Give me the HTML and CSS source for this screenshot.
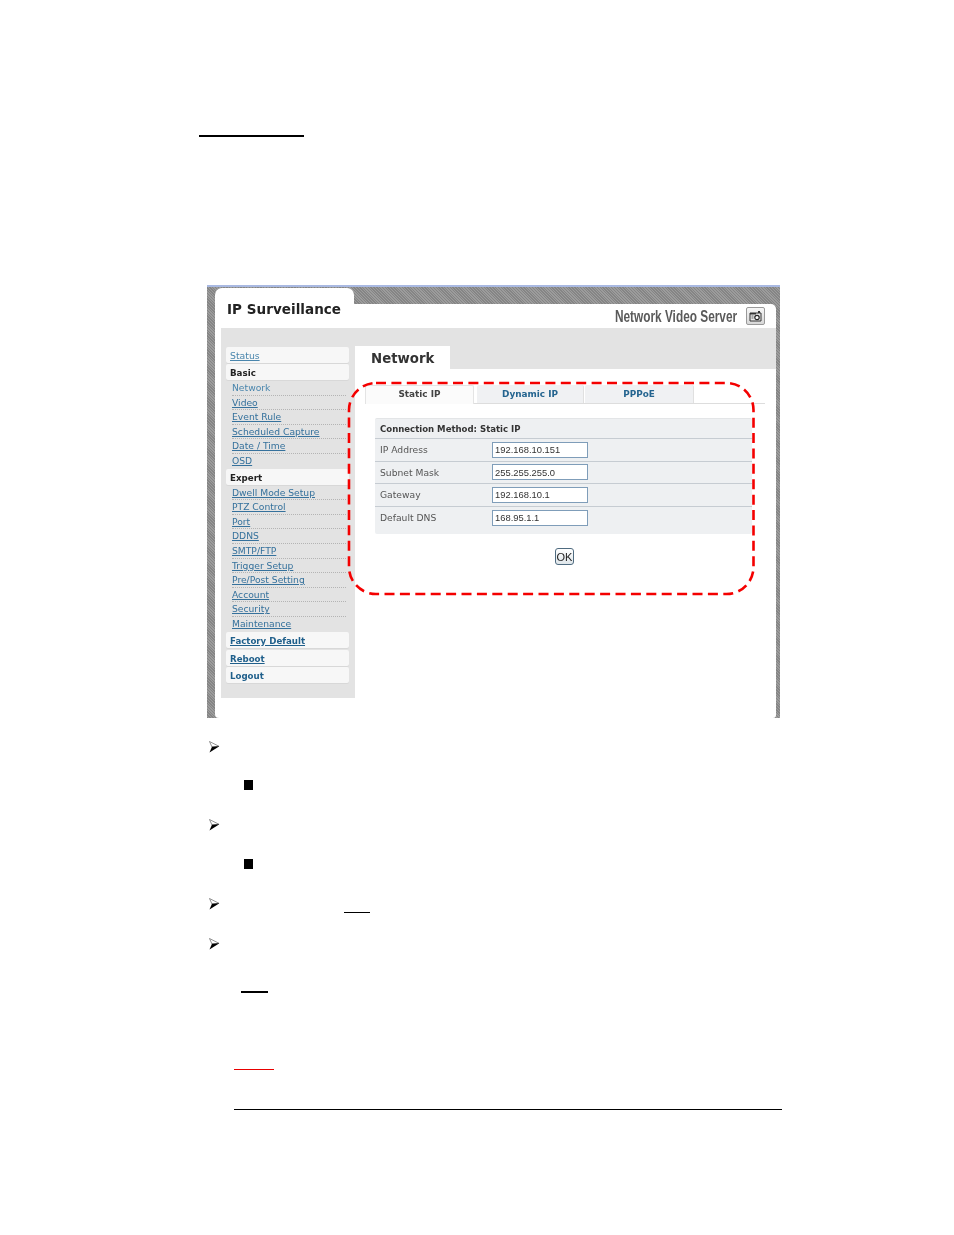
FILE: index.html
```html
<!DOCTYPE html>
<html lang="en">
<head>
    <meta charset="UTF-8">
    <title>IP Surveillance - Network</title>
    <link rel="stylesheet" href="styles.css">
</head>
<body>
    <div class="rule rule-heading"></div>

    <div class="shot">
        <div class="head">
            <div class="brand">IP Surveillance</div>
            <div class="head-right">
                <span class="product">Network Video Server</span>
                <span class="cam-btn">
                    <svg width="13" height="12" viewBox="0 0 13 12">
                        <path d="M1 3h11v8H1z" fill="#e8e8e8" stroke="#333" stroke-width="1"/>
                        <path d="M1 3h6v1.5H1zM9 1h2v2H9z" fill="#333"/>
                        <circle cx="8" cy="7.5" r="2.2" fill="#fff" stroke="#222" stroke-width="1.2"/>
                        <path d="M2.5 6h2M2.5 8h2" stroke="#666" stroke-width="1"/>
                    </svg>
                </span>
            </div>
        </div>

        <div class="body">
            <div class="sidebar">
                <div class="box"><a class="plain" href="#">Status</a></div>
                <div class="box section">Basic</div>
                <ul class="sublist">
                    <li><a class="light" href="#">Network</a></li>
                    <li><a href="#">Video</a></li>
                    <li><a href="#">Event Rule</a></li>
                    <li><a href="#">Scheduled Capture</a></li>
                    <li><a href="#">Date / Time</a></li>
                    <li><a href="#">OSD</a></li>
                </ul>
                <div class="box section">Expert</div>
                <ul class="sublist">
                    <li><a href="#">Dwell Mode Setup</a></li>
                    <li><a href="#">PTZ Control</a></li>
                    <li><a href="#">Port</a></li>
                    <li><a href="#">DDNS</a></li>
                    <li><a href="#">SMTP/FTP</a></li>
                    <li><a href="#">Trigger Setup</a></li>
                    <li><a href="#">Pre/Post Setting</a></li>
                    <li><a href="#">Account</a></li>
                    <li><a href="#">Security</a></li>
                    <li><a href="#">Maintenance</a></li>
                </ul>
                <div class="box action"><a href="#">Factory Default</a></div>
                <div class="box action reboot"><a href="#">Reboot</a></div>
                <div class="box action logout"><a href="#">Logout</a></div>
            </div>

            <div class="main">
                <div class="band"><div class="band-tab">Network</div></div>

                <div class="tabs">
                    <div class="tab active">Static IP</div>
                    <div class="tab dynamic">Dynamic IP</div>
                    <div class="tab pppoe">PPPoE</div>
                </div>

                <div class="form">
                    <div class="form-title">Connection Method: Static IP</div>
                    <div class="form-row">
                        <label>IP Address</label>
                        <input type="text" value="192.168.10.151">
                    </div>
                    <div class="form-row">
                        <label>Subnet Mask</label>
                        <input type="text" value="255.255.255.0">
                    </div>
                    <div class="form-row">
                        <label>Gateway</label>
                        <input type="text" value="192.168.10.1">
                    </div>
                    <div class="form-row">
                        <label>Default DNS</label>
                        <input type="text" value="168.95.1.1">
                    </div>
                </div>

                <div class="form-actions"><button type="button">OK</button></div>
            </div>
        </div>

        <!-- red callout drawn over the tabs and form -->
        <svg class="callout" width="410" height="216" viewBox="0 0 410 216">
            <rect x="2" y="2" width="404.5" height="211" rx="27" fill="none" stroke="#f40000" stroke-width="2.6" stroke-dasharray="10 5.4"/>
        </svg>
    </div>

    <svg class="arrow arrow-1" width="11" height="12" viewBox="0 0 11 12"><path d="M.5.5 10 5.3 3 6z" fill="#fff" stroke="#777" stroke-width=".8"/><path d="M3 5.8 10.4 5.2.5 11.5z" fill="#000"/></svg>
    <div class="square square-1"></div>
    <svg class="arrow arrow-2" width="11" height="12" viewBox="0 0 11 12"><path d="M.5.5 10 5.3 3 6z" fill="#fff" stroke="#777" stroke-width=".8"/><path d="M3 5.8 10.4 5.2.5 11.5z" fill="#000"/></svg>
    <div class="square square-2"></div>
    <svg class="arrow arrow-3" width="11" height="12" viewBox="0 0 11 12"><path d="M.5.5 10 5.3 3 6z" fill="#fff" stroke="#777" stroke-width=".8"/><path d="M3 5.8 10.4 5.2.5 11.5z" fill="#000"/></svg>
    <div class="rule rule-ip"></div>
    <svg class="arrow arrow-4" width="11" height="12" viewBox="0 0 11 12"><path d="M.5.5 10 5.3 3 6z" fill="#fff" stroke="#777" stroke-width=".8"/><path d="M3 5.8 10.4 5.2.5 11.5z" fill="#000"/></svg>
    <div class="rule rule-note"></div>
    <div class="rule rule-red"></div>
    <div class="rule rule-foot"></div>
</body>
</html>
```

FILE: styles.css
```css
body {
    margin: 0;
    padding-top: 135px;
    background: #fff;
    font-family: "DejaVu Sans", Verdana, sans-serif;
}

/* document marks around the screenshot */
.rule {
    background: #000;
    height: 1px;
}
.rule-heading {
    margin-left: 199px;
    width: 105px;
    height: 2px;
}
.rule-ip {
    margin: 2px 0 0 344px;
    width: 26px;
}
.rule-note {
    margin: 41px 0 0 241px;
    width: 27px;
    height: 2px;
}
.rule-red {
    margin: 76px 0 0 234px;
    width: 40px;
    background: #e80000;
}
.rule-foot {
    margin: 39px 0 0 234px;
    width: 548px;
}
.arrow {
    display: block;
    margin-left: 209px;
}
.arrow-1 { margin-top: 23px; }
.arrow-2 { margin-top: 29px; }
.arrow-3 { margin-top: 29px; }
.arrow-4 { margin-top: 25px; }
.square {
    width: 9px;
    height: 10px;
    margin-left: 244px;
    background: #000;
}
.square-1 { margin-top: 27px; }
.square-2 { margin-top: 28px; }

/* screenshot, slightly soft like the scanned original */
.shot {
    position: relative;
    box-sizing: border-box;
    width: 573px;
    height: 433px;
    margin: 148px 0 0 207px;
    padding: 1px 4px 0 8px;
    border-top: 2px solid #a9b9e2;
    background: repeating-linear-gradient(45deg, #858585 0, #858585 1px, #9c9c9c 1px, #9c9c9c 2px);
    filter: blur(0.3px);
}
.head {
    display: flex;
    height: 40px;
}
.brand {
    width: 139px;
    padding: 13px 0 0 12px;
    box-sizing: border-box;
    background: #fff;
    border-radius: 7px 7px 0 0;
    font-size: 13.5px;
    font-weight: bold;
    letter-spacing: 0.05px;
    color: #222;
}
.head-right {
    flex: 1;
    display: flex;
    align-items: center;
    justify-content: flex-end;
    margin-top: 16px;
    padding-right: 11px;
    background: #fff;
    border-radius: 0 5px 0 0;
}
.product {
    margin: 2px 9px 0 0;
    font-family: "Liberation Sans", Arial, sans-serif;
    font-size: 16px;
    font-weight: bold;
    color: #5a5a5a;
    transform: scaleX(0.74);
    transform-origin: right center;
}
.cam-btn {
    display: flex;
    align-items: center;
    justify-content: center;
    box-sizing: border-box;
    width: 19px;
    height: 18px;
    border: 1px solid #999;
    border-radius: 2px;
    background: linear-gradient(#f6f6f6, #d8d8d8);
}
.body {
    display: flex;
    height: 390px;
    padding-left: 6px;
    background: #fff;
    border-radius: 0 0 3px 4px;
}

/* left menu */
.sidebar {
    box-sizing: border-box;
    width: 134px;
    height: 370px;
    padding: 19px 6px 0 5px;
    background: #e3e3e3;
}
.box {
    box-sizing: border-box;
    height: 16px;
    margin-bottom: 1px;
    padding-left: 4px;
    background: #f7f7f7;
    border-radius: 2px;
    font-size: 9.3px;
    line-height: 17px;
    box-shadow: 0 1px 0 #d8d8d8;
}
.section {
    font-weight: bold;
    font-size: 8.7px;
    line-height: 18px;
    color: #222;
}
a {
    color: #35719c;
}
.plain {
    color: #4a86ad;
}
.sublist {
    list-style: none;
    margin: 0 0 0 6px;
    padding: 0;
    width: 114px;
}
.sublist li {
    box-sizing: border-box;
    height: 14.6px;
    font-size: 9.2px;
    line-height: 14px;
    border-bottom: 1px dotted #b4b4b4;
}
.sublist li:last-child {
    border-bottom: 0;
}
.light {
    color: #4a86ad;
    text-decoration: none;
}
.action {
    font-weight: bold;
    font-size: 8.65px;
    line-height: 18px;
}
.action a {
    color: #1f5f8b;
}
.reboot {
    margin-top: 2px;
}
.logout a {
    text-decoration: none;
}

/* right side */
.main {
    flex: 1;
    min-width: 0;
}
.band {
    height: 41px;
    padding-top: 18px;
    box-sizing: border-box;
    background: #e3e3e3;
}
.band-tab {
    box-sizing: border-box;
    width: 95px;
    height: 23px;
    padding-left: 16px;
    background: #fff;
    font-size: 13.3px;
    font-weight: bold;
    line-height: 26px;
    color: #333;
}
.tabs {
    display: flex;
    height: 19px;
    margin: 16px 11px 0 10px;
    border-bottom: 1px solid #ddd;
    box-sizing: border-box;
}
.tab {
    box-sizing: border-box;
    width: 109px;
    height: 18px;
    background: #f0f1f3;
    border-radius: 2px 2px 0 0;
    border-right: 1px solid #e0e0e0;
    font-size: 8.9px;
    font-weight: bold;
    line-height: 18px;
    text-align: center;
    color: #24648f;
}
.tab.active {
    background: #fbfbfb;
    border: 1px solid #e4e4e4;
    border-bottom: 0;
    height: 19px;
    line-height: 16px;
    color: #444;
}
.tab.dynamic {
    width: 107px;
    margin-left: 3px;
}
.tab.pppoe {
    margin-left: 1px;
}
.form {
    box-sizing: border-box;
    height: 116px;
    margin: 14px 24px 0 20px;
    background: #eef0f2;
    border-top: 1px solid #e3e5e7;
    border-radius: 2px;
}
.form-title {
    height: 19px;
    padding-left: 5px;
    font-size: 8.55px;
    font-weight: bold;
    line-height: 20px;
    color: #333;
}
.form-row {
    display: flex;
    align-items: center;
    box-sizing: border-box;
    height: 22.6px;
    padding-left: 5px;
    border-top: 1px solid #c6ccd2;
    font-size: 9.2px;
    color: #555;
}
.form-row label {
    width: 112px;
}
.form-row input {
    box-sizing: border-box;
    width: 96px;
    height: 16px;
    padding: 0 2px;
    border: 1px solid #7f9db9;
    background: #fff;
    font-family: "Liberation Sans", Arial, sans-serif;
    font-size: 9.4px;
    color: #333;
}
.form-actions {
    display: flex;
    justify-content: center;
    margin: 14px 22px 0 20px;
}
.form-actions button {
    box-sizing: border-box;
    width: 19px;
    height: 17px;
    padding: 0;
    border: 1px solid #4f6b80;
    border-radius: 3px;
    background: linear-gradient(#fff, #dfe6ea);
    font-family: "Liberation Sans", Arial, sans-serif;
    font-size: 11px;
    color: #222;
}
.callout {
    position: absolute;
    left: 139.5px;
    top: 94px;
}
```
